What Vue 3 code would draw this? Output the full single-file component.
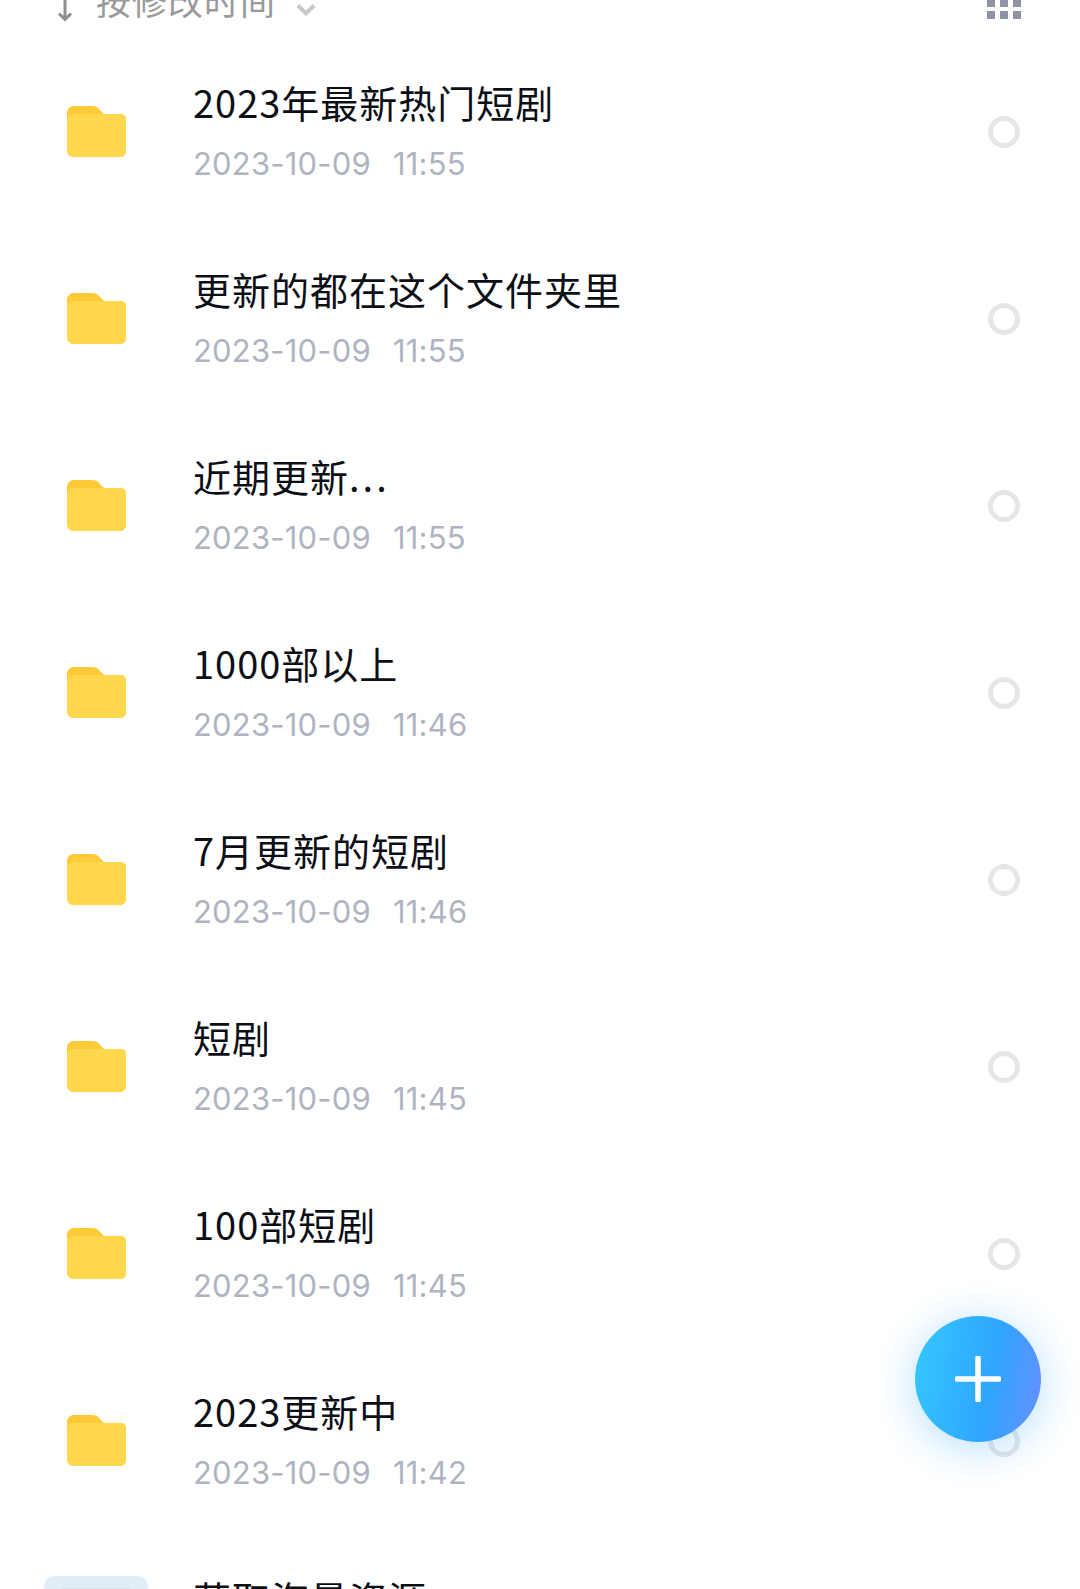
<script setup>
const rows = [
  { name: '2023年最新热门短剧', date: '2023-10-09', time: '11:55' },
  { name: '更新的都在这个文件夹里', date: '2023-10-09', time: '11:55' },
  { name: '近期更新', dots: '...', date: '2023-10-09', time: '11:55' },
  { name: '1000部以上', date: '2023-10-09', time: '11:46' },
  { name: '7月更新的短剧', date: '2023-10-09', time: '11:46' },
  { name: '短剧', date: '2023-10-09', time: '11:45' },
  { name: '100部短剧', date: '2023-10-09', time: '11:45' },
  { name: '2023更新中', date: '2023-10-09', time: '11:42' },
]
</script>

<template>
  <div class="page">
    <header class="sortbar">
      <div class="sort">
        <svg class="arrow" width="18" height="24" viewBox="0 0 18 24">
          <path d="M9 0V21M3 15.500L9 21.500L15 15.500" fill="none" stroke="#8f8f8f" stroke-width="3" />
        </svg>
        <span class="sort-label">按修改时间</span>
        <svg class="chev" width="20" height="14" viewBox="0 0 20 14">
          <path d="M2 2.500L10 10.500L18 2.500" fill="none" stroke="#c8c8c8" stroke-width="4" />
        </svg>
      </div>
      <div class="grid-btn">
        <i v-for="n in 6" :key="n" class="cell"></i>
      </div>
    </header>

    <ul class="list">
      <li v-for="row in rows" :key="row.name" class="row">
        <div class="thumb">
          <svg class="folder" width="60" height="52" viewBox="0 0 60 52">
            <path d="M0 7C0 3 3 0 7 0H25C29 0 31 1.500 33 4L37 8H53C57 8 59 10 59 14V44C59 48 57 51 53 51H7C3 51 0 48 0 44Z" fill="#ffca38" />
            <path d="M0 14C0 10 3 8 7 8H53C57 8 59 10 59 14V44C59 48 57 51 53 51H7C3 51 0 48 0 44Z" fill="#ffd74d" />
          </svg>
        </div>
        <div class="info">
          <div class="name">{{ row.name }}<span v-if="row.dots" class="dots">{{ row.dots }}</span></div>
          <div class="meta"><span>{{ row.date }}</span><span>{{ row.time }}</span></div>
        </div>
        <span class="radio"></span>
      </li>
      <li class="row">
        <div class="thumb">
          <div class="doc"><div class="doc-line"></div></div>
        </div>
        <div class="info last">
          <div class="name">获取海量资源</div>
        </div>
      </li>
    </ul>

    <button type="button" class="fab" aria-label="新建">
      <svg width="46" height="46" viewBox="0 0 46 46">
        <path d="M23 2V44M2 23H44" stroke="#fff" stroke-width="5.500" stroke-linecap="round" />
      </svg>
    </button>
  </div>
</template>

<style scoped>
.page {
  position: relative;
  width: 1080px;
  height: 1589px;
  overflow: hidden;
  background: #fff;
  font-family: "Noto Sans CJK SC", "Noto Sans", sans-serif;
}

.sortbar {
  height: 22px;
  padding: 0 59px 0 56px;
  display: flex;
  justify-content: space-between;
  align-items: flex-end;
}

.sort {
  display: flex;
  align-items: flex-end;
}

.sort-label {
  margin-left: 22px;
  margin-bottom: -3px;
  font-size: 35px;
  line-height: 50px;
  color: #9a9a9a;
  letter-spacing: 1px;
}

.chev {
  margin-left: 20px;
  margin-bottom: 5px;
}

.grid-btn {
  display: grid;
  grid-template-columns: repeat(3, 8px);
  grid-auto-rows: 8px;
  gap: 4px 5px;
  width: 34px;
  margin-bottom: 3px;
}

.cell {
  display: block;
  background: #8f93a3;
}

.list {
  list-style: none;
  margin: 16px 0 0;
  padding: 0;
}

.row {
  height: 187px;
  padding-left: 44px;
  display: flex;
  align-items: center;
}

.thumb {
  width: 104px;
  display: flex;
  justify-content: center;
}

.folder {
  margin-left: 2px;
}

.info {
  flex: 1;
  margin-left: 45px;
}

.info.last {
  margin-bottom: 60px;
}

.name {
  font-size: 38px;
  line-height: 54px;
  color: #0c0f16;
  letter-spacing: 1px;
}

.dots {
  letter-spacing: 3px;
}

.meta {
  display: flex;
  gap: 22px;
  margin-top: 11px;
  font-family: Inter, "Noto Sans", sans-serif;
  font-size: 31px;
  font-weight: 400;
  letter-spacing: 0.200px;
  line-height: 48px;
  color: #b0b4c2;
}

.radio {
  width: 32px;
  height: 32px;
  margin-right: 60px;
  box-sizing: border-box;
  border: 5px solid #e6e6e6;
  border-radius: 50%;
}

.doc {
  width: 104px;
  height: 104px;
  border-radius: 10px;
  overflow: hidden;
  background: linear-gradient(180deg, #e0ecf7, #edf4fb);
}

.doc-line {
  height: 3px;
  margin: 13px 18px 0;
  background: #ccd3dd;
  filter: blur(1px);
}

.fab {
  position: absolute;
  left: 915px;
  top: 1316px;
  width: 126px;
  height: 126px;
  padding: 0;
  border: 0;
  border-radius: 50%;
  display: flex;
  align-items: center;
  justify-content: center;
  background: linear-gradient(100deg, #35c8fe 0%, #2fa5ff 60%, #6a8eff 100%);
  box-shadow: 0 6px 44px rgba(64, 170, 255, 0.38);
}
</style>
